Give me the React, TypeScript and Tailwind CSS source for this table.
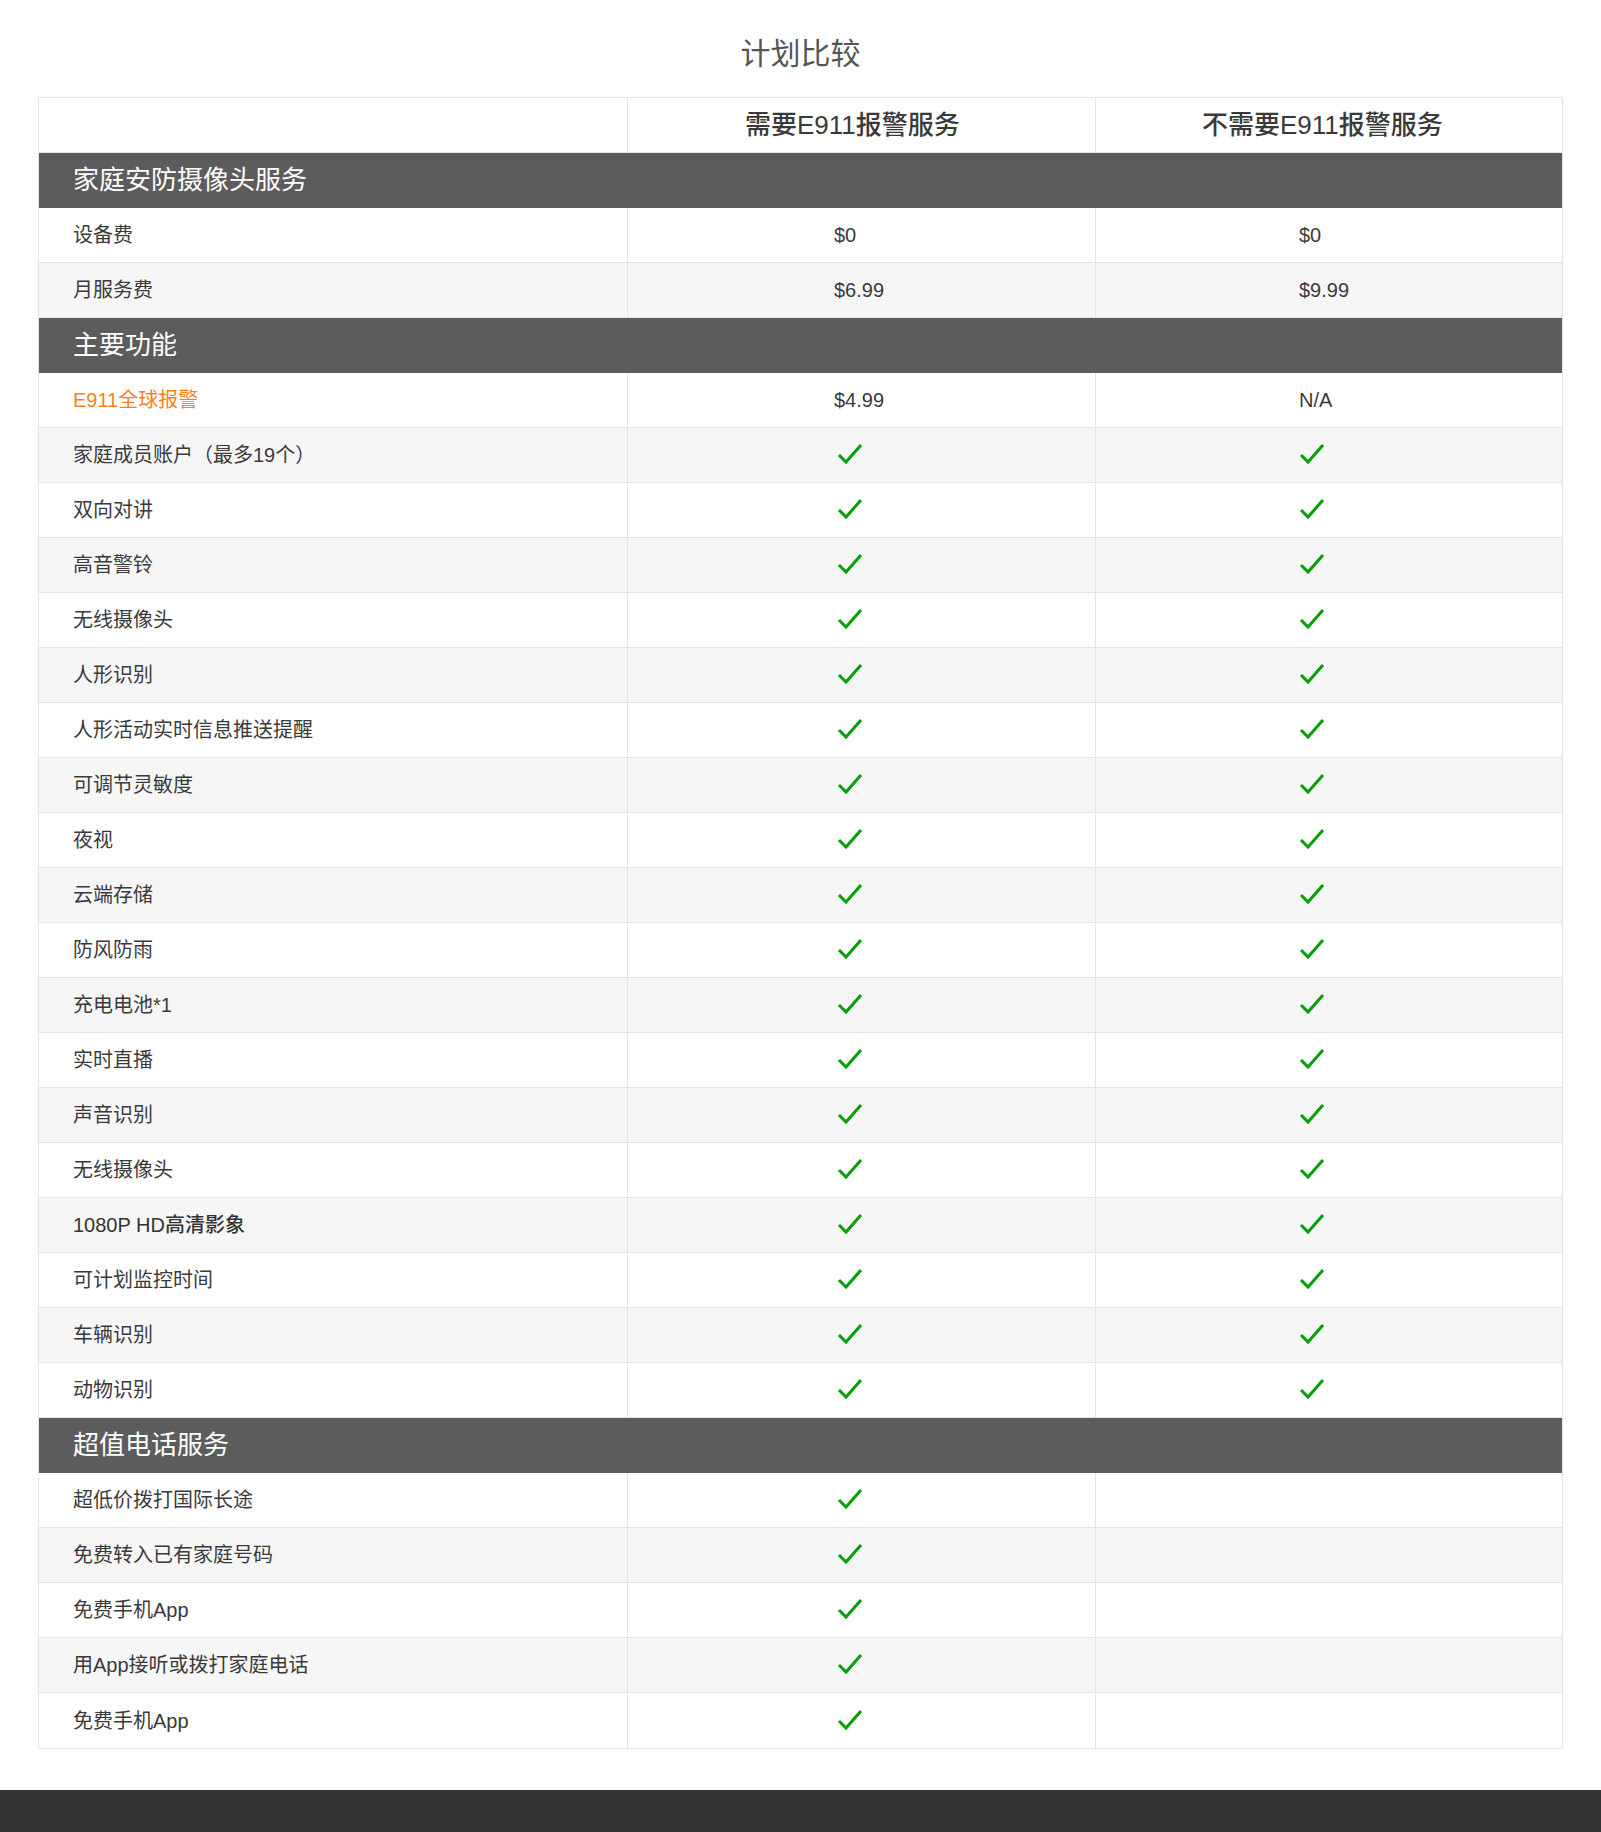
import React from "react";

type Val = "check" | string | null;
type Row = { label: string; a: Val; b: Val; orange?: boolean; bold?: boolean };
type Section = { title: string; rows: Row[] };

const sections: Section[] = [
  {
    title: "家庭安防摄像头服务",
    rows: [
      { label: "设备费", a: "$0", b: "$0" },
      { label: "月服务费", a: "$6.99", b: "$9.99" },
    ],
  },
  {
    title: "主要功能",
    rows: [
      { label: "E911全球报警", a: "$4.99", b: "N/A", orange: true },
      { label: "家庭成员账户（最多19个）", a: "check", b: "check" },
      { label: "双向对讲", a: "check", b: "check" },
      { label: "高音警铃", a: "check", b: "check" },
      { label: "无线摄像头", a: "check", b: "check" },
      { label: "人形识别", a: "check", b: "check" },
      { label: "人形活动实时信息推送提醒", a: "check", b: "check" },
      { label: "可调节灵敏度", a: "check", b: "check" },
      { label: "夜视", a: "check", b: "check" },
      { label: "云端存储", a: "check", b: "check" },
      { label: "防风防雨", a: "check", b: "check" },
      { label: "充电电池*1", a: "check", b: "check" },
      { label: "实时直播", a: "check", b: "check" },
      { label: "声音识别", a: "check", b: "check" },
      { label: "无线摄像头", a: "check", b: "check" },
      { label: "1080P HD高清影象", a: "check", b: "check", bold: true },
      { label: "可计划监控时间", a: "check", b: "check" },
      { label: "车辆识别", a: "check", b: "check" },
      { label: "动物识别", a: "check", b: "check" },
    ],
  },
  {
    title: "超值电话服务",
    rows: [
      { label: "超低价拨打国际长途", a: "check", b: null },
      { label: "免费转入已有家庭号码", a: "check", b: null },
      { label: "免费手机App", a: "check", b: null },
      { label: "用App接听或拨打家庭电话", a: "check", b: null },
      { label: "免费手机App", a: "check", b: null },
    ],
  },
];

const FONT = { fontFamily: '"Liberation Sans", "Noto Sans CJK SC", sans-serif' };

function Check({ offset }: { offset: string }) {
  return (
    <svg width="26" height="22" viewBox="0 0 26 22" className={`${offset} -mt-[2px]`}>
      <path d="M2 12 L9 19 L24 2" fill="none" stroke="#03a003" strokeWidth="3" />
    </svg>
  );
}

function Cell({ v, col }: { v: Val; col: "a" | "b" }) {
  const pad = col === "a" ? "pl-[206px] border-r border-[#e4e4e4]" : "pl-[203px]";
  return (
    <div className={`flex items-center h-full ${pad}`}>
      {v === "check" ? (
        <Check offset={col === "a" ? "ml-[3px]" : "ml-[0px]"} />
      ) : v ? (
        <span className="text-[20px] text-[#3a3a3a]">{v}</span>
      ) : null}
    </div>
  );
}

export default function App() {
  return (
    <div className="w-[1601px] bg-white" style={FONT}>
      <div className="pt-[34px] pb-[23px] text-center text-[30px] leading-[40px] text-[#555]">计划比较</div>
      <div className="mx-[38px] border border-[#e4e4e4]">
        <div className="grid grid-cols-[589px_468px_1fr] h-[55px] border-b border-[#e4e4e4] bg-white">
          <div className="border-r border-[#e4e4e4]" />
          <div className="flex items-center pl-[117px] border-r border-[#e4e4e4] text-[26px] font-medium text-[#3a3a3a]">
            需要E911报警服务
          </div>
          <div className="flex items-center pl-[106px] text-[26px] font-medium text-[#3a3a3a]">
            不需要E911报警服务
          </div>
        </div>
        {sections.map((s, si) => (
          <div key={si}>
            <div className="h-[55px] bg-[#5d5c5d] flex items-center pl-[34px] text-[26px] text-white">
              {s.title}
            </div>
            {s.rows.map((r, ri) => {
              const last = si === sections.length - 1 && ri === s.rows.length - 1;
              return (
                <div
                  key={ri}
                  className={`grid grid-cols-[589px_468px_1fr] h-[55px] ${last ? "" : "border-b border-[#e4e4e4]"} ${
                    ri % 2 === 1 ? "bg-[#f6f6f6]" : "bg-white"
                  }`}
                >
                  <div
                    className={`flex items-center pl-[34px] border-r border-[#e4e4e4] text-[20px] ${
                      r.orange ? "text-[#ff7f1c]" : r.bold ? "text-[#333] font-medium" : "text-[#3a3a3a]"
                    }`}
                  >
                    {r.label}
                  </div>
                  <Cell v={r.a} col="a" />
                  <Cell v={r.b} col="b" />
                </div>
              );
            })}
          </div>
        ))}
      </div>
      <div className="mt-[41px] h-[42px] bg-[#333333]" />
    </div>
  );
}
